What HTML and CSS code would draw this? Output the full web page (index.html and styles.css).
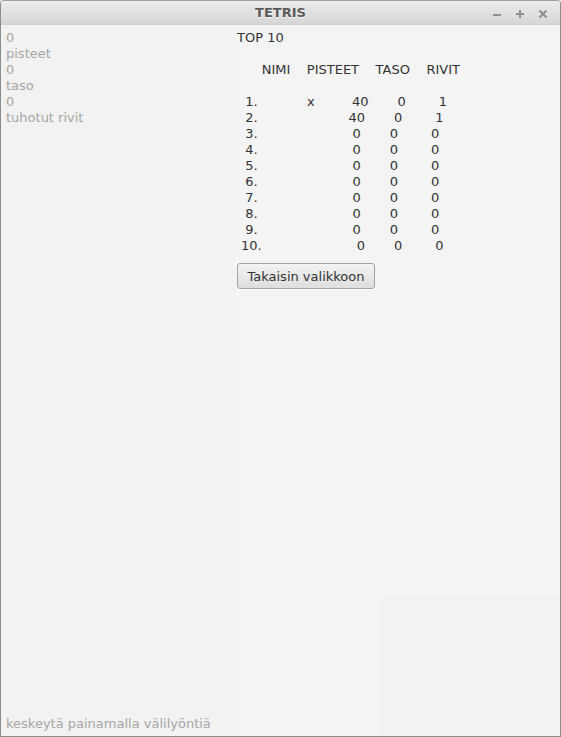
FILE: index.html
```html
<!DOCTYPE html>
<html>
<head>
<meta charset="utf-8">
<link rel="stylesheet" href="styles.css">
</head>
<body>
<div class="window">
  <div class="titlebar">
    <div class="title">TETRIS</div>
    <div class="controls">
      <svg class="ctl" width="10" height="10" viewBox="0 0 10 10"><path d="M1 6h8" /></svg>
      <svg class="ctl" width="10" height="10" viewBox="0 0 10 10"><path d="M1 5h8M5 1v8" /></svg>
      <svg class="ctl" width="10" height="10" viewBox="0 0 10 10"><path d="M1.5 1.5l7 7M8.5 1.5l-7 7" /></svg>
    </div>
  </div>
  <div class="content">
    <div class="side">
      <div class="stats">
        <div>0</div>
        <div>pisteet</div>
        <div>0</div>
        <div>taso</div>
        <div>0</div>
        <div>tuhotut rivit</div>
      </div>
      <div class="hint">keskeytä painamalla välilyöntiä</div>
    </div>
    <div class="main">
      <div class="scores">
        <div class="heading">TOP 10</div>
        <div class="table">
          <div class="row"> </div>
          <div class="row">     NIMI    PISTEET    TASO    RIVIT</div>
          <div class="row"> </div>
          <div class="row"> 1.            x         40       0        1</div>
          <div class="row"> 2.                      40       0        1</div>
          <div class="row"> 3.                       0       0        0</div>
          <div class="row"> 4.                       0       0        0</div>
          <div class="row"> 5.                       0       0        0</div>
          <div class="row"> 6.                       0       0        0</div>
          <div class="row"> 7.                       0       0        0</div>
          <div class="row"> 8.                       0       0        0</div>
          <div class="row"> 9.                       0       0        0</div>
          <div class="row">10.                       0       0        0</div>
        </div>
        <button class="back">Takaisin valikkoon</button>
      </div>
      <div class="filler">
        <div class="filler-top"></div>
      </div>
    </div>
  </div>
</div>
</body>
</html>
```

FILE: styles.css
```css
* { box-sizing: border-box; }
html, body {
  margin: 0;
  padding: 0;
  background: #f2f2f2;
}
body {
  font-family: "DejaVu Sans", sans-serif;
  font-size: 13px;
  line-height: 16px;
  color: #333333;
}
.window {
  width: 561px;
  height: 737px;
  border: 1px solid #8c8c8c;
  border-top-color: #a0a0a0;
  border-radius: 4px 4px 0 0;
  display: flex;
  flex-direction: column;
  overflow: hidden;
  background: #f2f2f2;
}
.titlebar {
  height: 24px;
  flex: none;
  background: linear-gradient(#ececec, #d6d6d6);
  border-bottom: 1px solid #d0d0d0;
  display: flex;
  align-items: center;
  justify-content: center;
  position: relative;
}
.title {
  font-weight: bold;
  font-size: 13px;
  color: #5a5a5a;
  text-shadow: 0 1px 0 rgba(255,255,255,0.7);
  padding-top: 1px;
}
.controls {
  position: absolute;
  right: 12px;
  top: 8px;
  display: flex;
  gap: 13px;
}
.ctl {
  display: block;
}
.ctl path {
  stroke: #8e8e8e;
  stroke-width: 2;
  fill: none;
}
.content {
  flex: 1;
  display: flex;
  min-height: 0;
}
.side {
  width: 235px;
  flex: none;
  display: flex;
  flex-direction: column;
  justify-content: space-between;
  padding: 5px 0 4px 5px;
  color: #a6a6a6;
  background: #f2f2f2;
}
.main {
  flex: 1;
  display: flex;
}
.scores {
  width: 147px;
  flex: none;
  background: #f4f4f4;
  padding: 5px 0 0 1px;
  display: flex;
  flex-direction: column;
  align-items: flex-start;
  position: relative;
  z-index: 1;
}
.heading {
  white-space: pre;
}
.table {
  padding-left: 4px;
}
.row {
  white-space: pre;
  height: 16px;
}
.back {
  margin-top: 9px;
  font-family: "DejaVu Sans", sans-serif;
  font-size: 13px;
  line-height: 16px;
  color: #333333;
  height: 26px;
  width: 138px;
  padding: 5px 0 3px 0;
  border: 1px solid #a2a2a2;
  border-radius: 3px;
  background: linear-gradient(#f3f3f3, #dedede);
  box-shadow: 0 1px 0 rgba(255,255,255,0.8);
  text-align: center;
  white-space: nowrap;
}
.filler {
  flex: 1;
  display: flex;
  flex-direction: column;
  background: #f2f2f2;
}
.filler-top {
  height: 570px;
  background: #f4f4f4;
}
```
